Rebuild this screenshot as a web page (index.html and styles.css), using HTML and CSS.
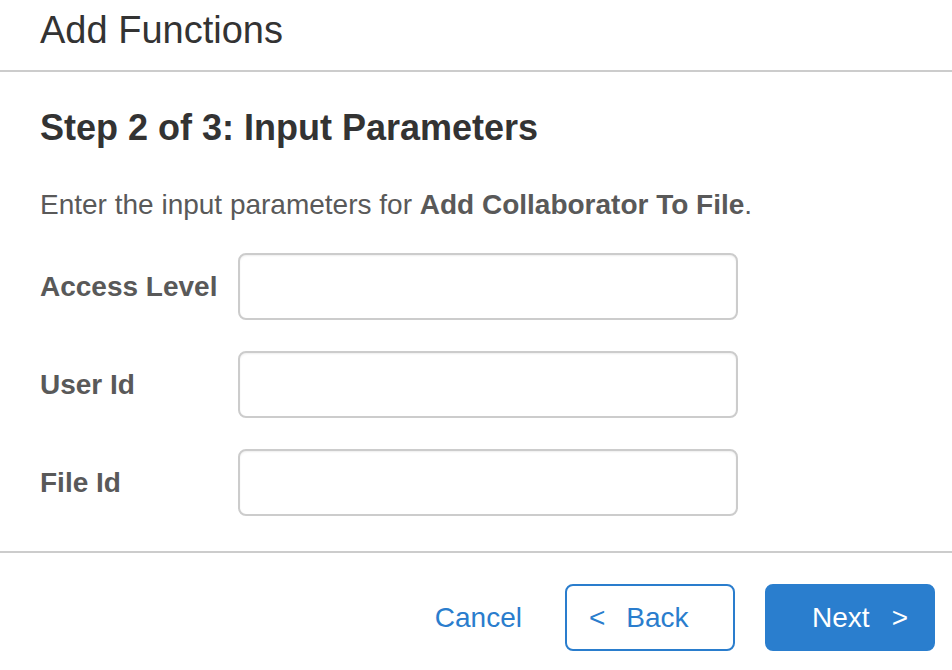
FILE: index.html
```html
<!DOCTYPE html>
<html lang="en">
<head>
<meta charset="utf-8">
<title>Add Functions</title>
<link rel="stylesheet" href="styles.css">
</head>
<body>
<div class="dialog">
  <header class="header">
    <h1 class="title">Add Functions</h1>
  </header>
  <main class="content">
    <h2 class="step">Step 2 of 3: Input Parameters</h2>
    <p class="desc">Enter the input parameters for <strong>Add Collaborator To File</strong>.</p>
    <form class="form">
      <div class="row">
        <label class="label" for="access">Access Level</label>
        <input class="field" id="access" type="text">
      </div>
      <div class="row">
        <label class="label" for="user">User Id</label>
        <input class="field" id="user" type="text">
      </div>
      <div class="row">
        <label class="label" for="file">File Id</label>
        <input class="field" id="file" type="text">
      </div>
    </form>
  </main>
  <footer class="footer">
    <a class="cancel" href="#">Cancel</a>
    <button class="btn btn-back" type="button"><span class="arrow-left">&lt;</span>Back</button>
    <button class="btn btn-next" type="button">Next<span class="arrow-right">&gt;</span></button>
  </footer>
</div>
</body>
</html>
```

FILE: styles.css
```css
* {
  box-sizing: border-box;
}

html, body {
  margin: 0;
  padding: 0;
  background: #ffffff;
}

body {
  font-family: "Liberation Sans", Arial, Helvetica, sans-serif;
  color: #333333;
}

.dialog {
  width: 952px;
  height: 670px;
  display: flex;
  flex-direction: column;
}

.header {
  height: 72px;
  padding: 11px 0 0 40px;
  border-bottom: 2px solid #cccccc;
}

.title {
  margin: 0;
  font-size: 38px;
  line-height: 38px;
  font-weight: normal;
  color: #333333;
}

.content {
  padding: 38px 0 0 40px;
  height: 481px;
  border-bottom: 2px solid #cccccc;
}

.step {
  margin: 0;
  font-size: 36px;
  line-height: 36px;
  font-weight: bold;
  color: #333333;
}

.desc {
  margin: 45px 0 0 0;
  font-size: 28px;
  line-height: 28px;
  color: #595959;
}

.desc strong {
  font-weight: bold;
}

.form {
  margin-top: 34px;
  display: flex;
  flex-direction: column;
  gap: 31px;
}

.row {
  display: flex;
  align-items: center;
}

.label {
  width: 198px;
  font-size: 28px;
  line-height: 28px;
  font-weight: bold;
  color: #595959;
}

.field {
  width: 500px;
  height: 67px;
  margin: 0;
  border: 2px solid #cccccc;
  border-radius: 8px;
  background: #ffffff;
  box-shadow: inset 0 1px 2px rgba(0, 0, 0, 0.07);
  font-family: inherit;
  font-size: 28px;
  padding: 0 14px;
  outline: none;
}

.footer {
  flex: 1;
  display: flex;
  justify-content: flex-end;
  align-items: flex-start;
  padding: 31px 17px 0 0;
}

.cancel {
  align-self: flex-start;
  height: 67px;
  display: flex;
  align-items: center;
  margin-right: 43px;
  font-size: 28px;
  color: #2a7dcd;
  text-decoration: none;
}

.btn {
  width: 170px;
  height: 67px;
  margin: 0;
  border: 2px solid #2a7dcd;
  border-radius: 8px;
  font-family: inherit;
  font-size: 28px;
  line-height: 28px;
  display: flex;
  align-items: center;
  cursor: pointer;
}

.btn-back {
  background: #ffffff;
  color: #2a7dcd;
  justify-content: flex-start;
  padding: 0 0 0 22px;
}

.btn-next {
  margin-left: 30px;
  background: #2a7ece;
  border-color: #2a7ece;
  color: #ffffff;
  justify-content: flex-end;
  padding: 0 25px 0 0;
}

.arrow-left {
  margin-right: 21px;
}

.arrow-right {
  margin-left: 22px;
}
```
